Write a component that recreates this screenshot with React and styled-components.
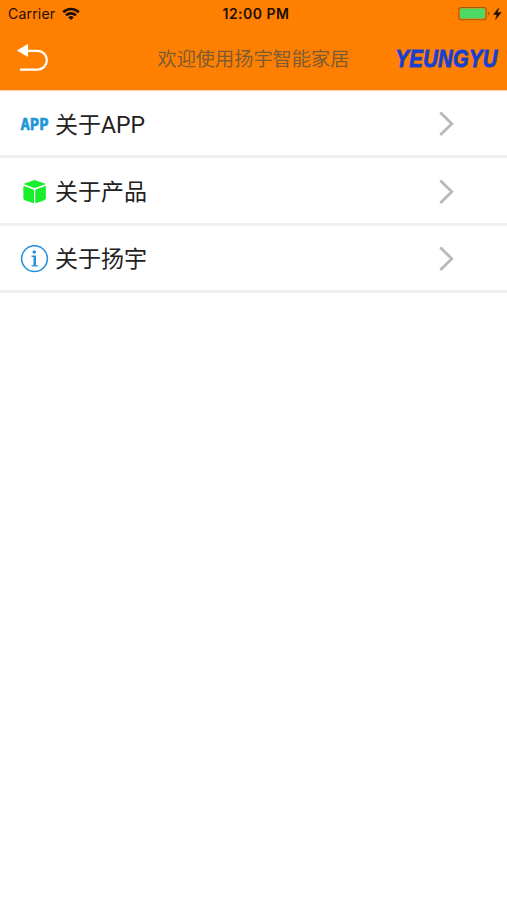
import styled, { createGlobalStyle } from 'styled-components'

const GlobalStyle = createGlobalStyle`
  *{
    box-sizing: border-box;
  }

  body{
    margin: 0;
    background: #fff;
    font-family: Roboto, "Noto Sans CJK SC", sans-serif;
  }
`

const Screen = styled.div`
  width: 507px;
  min-height: 900px;
  background: #fff;
`

const Header = styled.header`
  height: 91px;
  background: #ff8000;
  border-bottom: 1px solid #ffcf9f;
`

const StatusBar = styled.div`
  display: grid;
  grid-template-columns: 1fr auto 1fr;
  align-items: center;
  height: 27px;
  padding: 0 4px 0 8px;
  font-family: Inter, sans-serif;
  font-size: 14px;
  line-height: 27px;
  color: #1c0e04;

  svg{
    display: block;
  }
`

const Carrier = styled.div`
  display: flex;
  align-items: center;
  gap: 7px;

  span{
    width: 47px;
    white-space: nowrap;
    letter-spacing: .2px;
  }
`

const Clock = styled.div`
  padding-left: 1px;
  font-weight: 600;
  letter-spacing: .5px;
`

const Power = styled.div`
  display: flex;
  justify-content: flex-end;
`

const NavBar = styled.div`
  display: grid;
  grid-template-columns: 141.5px auto 1fr;
  align-items: center;
  height: 63px;
  padding: 0 4px 0 16px;

  svg{
    display: block;
  }
`

const Title = styled.h1`
  margin: 0;
  padding-top: 2px;
  font-size: 19.2px;
  font-weight: 400;
  line-height: 28px;
  color: #7d5b33;
`

const Brand = styled.div`
  display: flex;
  justify-content: flex-end;
`

const Menu = styled.ul`
  margin: 0;
  padding: 0;
  list-style: none;
`

const MenuItem = styled.li`
  display: flex;
  align-items: center;
  height: 67.4px;
  padding: 2px 52px 0 20px;
  border-bottom: 3px solid #f0f0f0;

  svg{
    display: block;
    flex: none;
  }
`

const Label = styled.span`
  flex: 1;
  padding: 3px 0 0 6px;
  font-size: 23px;
  line-height: 34px;
  color: #222;
`

function WifiIcon() {
  return (
    <svg width="18" height="14" viewBox="0 0 18 14" fill="none" stroke="#1c0e04" strokeWidth="2.6">
      <path d="M1.200 5.200a11.200 11.200 0 0 1 15.600 0" />
      <path d="M4 8.400a7.200 7.200 0 0 1 10 0" />
      <path d="M9 13 6.300 10.400a3.900 3.900 0 0 1 5.400 0z" fill="#1c0e04" stroke="none" />
    </svg>
  )
}

function BatteryIcon() {
  return (
    <svg width="45" height="14" viewBox="0 0 45 14">
      <rect x=".8" y=".4" width="27.400" height="12.400" rx="2.600" fill="none" stroke="#a65a10" strokeWidth="1.100" />
      <rect x="2" y="1.600" width="25" height="10" rx="1.400" fill="#4cd964" />
      <path d="M30 4.500v4c1.300-.5 1.600-1.200 1.600-2S31.300 5 30 4.500z" fill="#a65a10" />
      <path d="M40.800 .8 35.400 7.500h3.500l-1.400 5.100 5.800-7.200h-3.800z" fill="#1c0e04" stroke="#1c0e04" strokeWidth=".4" />
    </svg>
  )
}

function BackIcon() {
  return (
    <svg width="33" height="34" viewBox="0 0 33 34">
      <path d="M.8 8.500 12 2v13z" fill="#fff" />
      <path d="M11 8.900h10.500a9.300 9.300 0 0 1 0 18.700H4" fill="none" stroke="#fff" strokeWidth="2.200" />
    </svg>
  )
}

function Logo() {
  return (
    <svg width="110" height="30" viewBox="0 0 110 30" overflow="visible">
      <text
        transform="translate(2.600 22.800) scale(.875 1)"
        fill="#173fd0"
        stroke="#173fd0"
        strokeWidth=".9"
        fontFamily="Liberation Sans, Arial, sans-serif"
        fontSize="23"
        fontWeight="700"
        fontStyle="italic"
        letterSpacing=".4"
      >
        YEUNGYU
      </text>
    </svg>
  )
}

function AppIcon() {
  return (
    <svg width="29" height="28" viewBox="0 0 29 28" overflow="visible">
      <text
        x=".5"
        y="19.900"
        textLength="28"
        lengthAdjust="spacingAndGlyphs"
        fill="#1e97d8"
        stroke="#1e97d8"
        strokeWidth=".6"
        fontFamily="DejaVu Sans Mono, monospace"
        fontSize="16"
        fontWeight="700"
      >
        APP
      </text>
    </svg>
  )
}

function BoxIcon() {
  return (
    <svg width="29" height="28" viewBox="0 0 29 28" fill="#17ef2b" stroke="#17ef2b" strokeWidth="1" strokeLinejoin="round">
      <path d="M14.600 2.600 24.800 6 14.600 9.600 4.500 6z" />
      <path d="M3.900 8.500 13.500 12V24.700L4.900 21.800Q3.900 21.400 3.900 20.400z" />
      <path d="M25.300 8.500 15.800 12V24.700L24.300 21.800Q25.300 21.400 25.300 20.400z" />
    </svg>
  )
}

function InfoIcon() {
  return (
    <svg width="29" height="28" viewBox="0 0 29 28">
      <circle cx="14.500" cy="13.600" r="12.900" fill="none" stroke="#2a91dc" strokeWidth="1.600" />
      <circle cx="14.300" cy="7" r="1.800" fill="#2a91dc" />
      <path d="M11.600 10.600h4.400v9.700h1.900v1.300h-6.300v-1.300h1.900v-8.400h-1.900z" fill="#2a91dc" />
    </svg>
  )
}

function Chevron() {
  return (
    <svg width="16" height="26" viewBox="0 0 16 26" fill="none" stroke="#b8b8b8" strokeWidth="2.800">
      <path d="M1.300 1.500 12.800 12.700 1.300 23.900" />
    </svg>
  )
}

const items = [
  { label: '关于APP', Icon: AppIcon },
  { label: '关于产品', Icon: BoxIcon },
  { label: '关于扬宇', Icon: InfoIcon }
]

function App() {
  return (
    <Screen>
      <GlobalStyle />
      <Header>
        <StatusBar>
          <Carrier>
            <span>Carrier</span>
            <WifiIcon />
          </Carrier>
          <Clock>12:00 PM</Clock>
          <Power>
            <BatteryIcon />
          </Power>
        </StatusBar>
        <NavBar>
          <BackIcon />
          <Title>欢迎使用扬宇智能家居</Title>
          <Brand>
            <Logo />
          </Brand>
        </NavBar>
      </Header>
      <Menu>
        {
          items.map(({ label, Icon }) => {
            return (
              <MenuItem key={label}>
                <Icon />
                <Label>{label}</Label>
                <Chevron />
              </MenuItem>
            )
          })
        }
      </Menu>
    </Screen>
  )
}

export default App
